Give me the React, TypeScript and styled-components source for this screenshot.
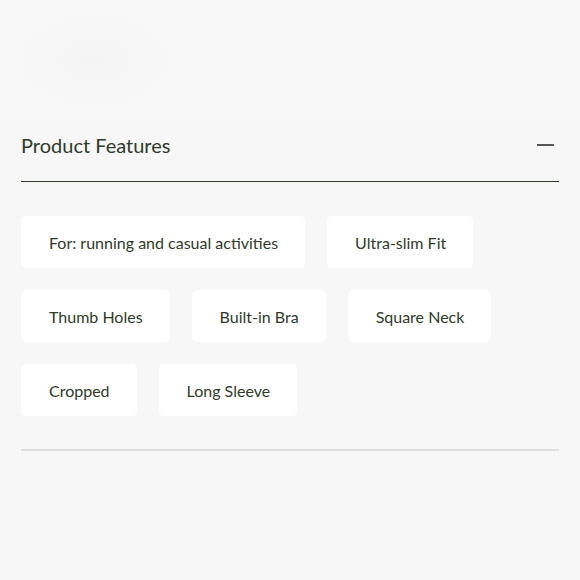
import React from "react";
import styled, { createGlobalStyle } from "styled-components";

const GlobalStyle = createGlobalStyle`
  html, body {
    margin: 0;
    padding: 0;
    background: #f7f7f7;
  }
  body {
    font-family: Lato, "Liberation Sans", sans-serif;
    color: #2e3b28;
  }
`;

const features = [
  "For: running and casual activities",
  "Ultra-slim Fit",
  "Thumb Holes",
  "Built-in Bra",
  "Square Neck",
  "Cropped",
  "Long Sleeve",
];

const Page = styled.div`
  width: 580px;
  height: 580px;
  overflow: hidden;
  background: #f7f7f7;
`;

const Hero = styled.div`
  height: 120px;
  background: radial-gradient(ellipse 80px 50px at 95px 60px, #f4f4f4 0%, #f6f6f6 60%, #f8f8f8 100%);
`;

const Section = styled.section`
  padding: 0 21px;
`;

const HeaderRow = styled.div`
  display: flex;
  justify-content: space-between;
  align-items: center;
  padding: 13px 0 24px;
  border-bottom: 1.5px solid #2f3b29;
`;

const Title = styled.h2`
  margin: 0;
  font-size: 20px;
  line-height: 24px;
  font-weight: 400;
  color: #2e3b28;
`;

const Toggle = styled.button`
  width: 18px;
  height: 18px;
  margin-right: 4px;
  padding: 0;
  border: 0;
  background: none;
  display: flex;
  align-items: center;
  cursor: pointer;
`;

const Dash = styled.span`
  display: block;
  width: 17px;
  height: 1.6px;
  background: #555a55;
`;

const Chips = styled.div`
  display: flex;
  flex-wrap: wrap;
  gap: 22px;
  margin-top: 34px;
  padding-bottom: 33px;
  border-bottom: 2px solid #dedede;
`;

const Chip = styled.div`
  height: 52px;
  padding: 0 27px 0 28px;
  display: flex;
  align-items: center;
  background: #ffffff;
  border-radius: 5px;
  font-size: 16px;
  color: #2e3b28;
  white-space: nowrap;
`;

export default function App() {
  return (
    <Page>
      <GlobalStyle />
      <Hero />
      <Section>
        <HeaderRow>
          <Title>Product Features</Title>
          <Toggle aria-label="Collapse">
            <Dash />
          </Toggle>
        </HeaderRow>
        <Chips>
          {features.map((f) => (
            <Chip key={f}>{f}</Chip>
          ))}
        </Chips>
      </Section>
    </Page>
  );
}
